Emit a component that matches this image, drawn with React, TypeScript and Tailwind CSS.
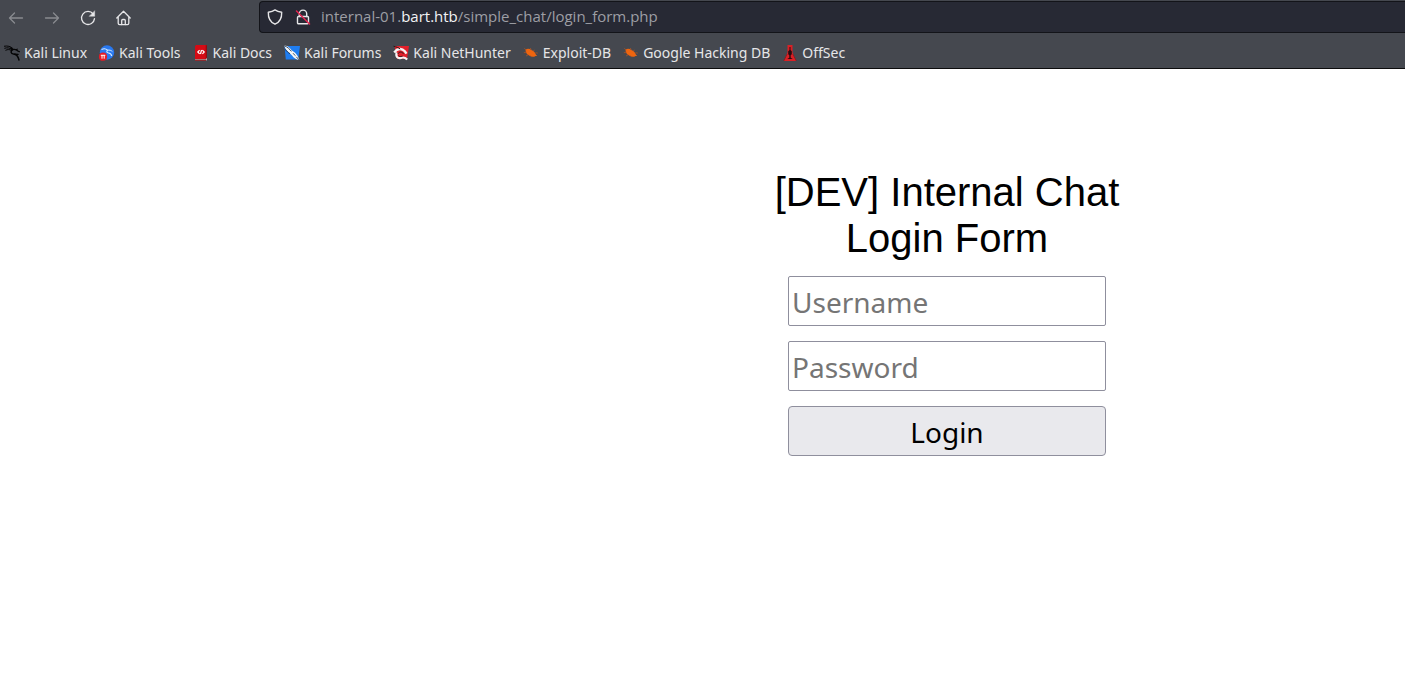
import type { ReactNode } from "react";

const svgProps = { width: 16, height: 16, viewBox: "0 0 16 16", "aria-hidden": true } as const;

const line = {
  fill: "none",
  stroke: "currentColor",
  strokeWidth: 1.3,
  strokeLinecap: "round",
  strokeLinejoin: "round",
} as const;

function BackIcon() {
  return (
    <svg {...svgProps} {...line}>
      <path d="M14.500 8H1.500M6.500 3 1.500 8l5 5" />
    </svg>
  );
}

function ForwardIcon() {
  return (
    <svg {...svgProps} {...line}>
      <path d="M1.500 8h13M9.500 3l5 5-5 5" />
    </svg>
  );
}

function ReloadIcon() {
  return (
    <svg {...svgProps} {...line}>
      <path d="M13.200 4A6.500 6.500 0 1 0 14.500 8.600" />
      <path d="M14.700 1v5.300H9.400z" fill="currentColor" strokeWidth={0.4} />
    </svg>
  );
}

function HomeIcon() {
  return (
    <svg {...svgProps} {...line}>
      <path d="M.8 8 7.500 1.300 14.200 8M2.200 6.800v6.500q0 1.400 1.400 1.400h7.800q1.400 0 1.400-1.400V6.800" />
      <path d="M5.700 14.500v-4q0-1 1-1h1.600q1 0 1 1v4" />
    </svg>
  );
}

function ShieldIcon() {
  return (
    <svg {...svgProps} {...line} strokeWidth={1.4}>
      <path d="M8 .9C6.200 2.200 3.800 2.900 1.300 3.200 1.100 8.700 2.800 13 8 15.200c5.200-2.200 6.900-6.500 6.700-12C12.200 2.900 9.800 2.200 8 .9z" />
    </svg>
  );
}

function InsecureIcon() {
  return (
    <svg {...svgProps} {...line} strokeWidth={1.4}>
      <path d="M4.300 7.500V4.800a3.700 3.700 0 0 1 7.400 0v2.700" />
      <rect x="2.500" y="7.500" width="11" height="7.300" rx="1" />
      <path d="M1.500 2 14.500 15" stroke="#e2244f" strokeWidth="1.500" />
    </svg>
  );
}

function DragonIcon() {
  return (
    <svg {...svgProps} fill="none" stroke="#050506" strokeLinecap="round">
      <path d="M.4 1.200C3.500.6 6.500 1.200 9 3.600M.7 3.200C3.500 2.200 6 3 8 4.500M1.800 5.200C3.800 4.200 5.500 4.400 7 5.200" strokeWidth="1" />
      <path d="M6.800 3 8.500 4.700C6.200 6.400 6.800 8.700 9.500 9c3 .2 4.600 2 5.500 6" strokeWidth="1.500" />
      <path d="M8.500 4.600c2.200-.6 4.200-.2 5.800 1.700l1.200.4M12 5l1.200-.8M10.500 9.100l3.700.2" strokeWidth="1.200" />
    </svg>
  );
}

function ToolsIcon() {
  return (
    <svg {...svgProps}>
      <circle cx="8" cy="7.500" r="7.200" fill="#2878f0" />
      <path d="M2.500 4.500c2.500-1.300 4.700-.7 6 .7-1.300 1.500-.7 2.600 1.100 2.800 2 .2 2.700 1.200 3.200 3" fill="none" stroke="#d9ecff" strokeWidth="1.100" />
      <path d="M8.500 5.200c2-.4 3.700.1 4.900 1.400" fill="none" stroke="#d9ecff" strokeWidth="1" />
      <circle cx="4" cy="11.700" r="4.100" fill="#e51c27" />
      <path d="M1.800 10.300h4.500M3 10.300v3.400M5.200 10.300v3.400" stroke="#fff" strokeWidth="1" />
    </svg>
  );
}

function DocsIcon() {
  return (
    <svg {...svgProps}>
      <path d="M2 1.300 3 0h11v13l-1.300 1.200H2z" fill="#d40b15" />
      <path d="M12.700.2H14V13l-1.300 1.200z" fill="#930b11" />
      <path d="M2 14.200h10.700L14 13v1.800L13 16H2z" fill="#c9b4b4" />
      <path d="M2 15.300h11" stroke="#7f090e" strokeWidth="1" />
      <path d="M6.600 5.200 4.800 7l1.800 1.800M9.400 5.200 11.200 7 9.400 8.800M8.500 5 7.500 9" fill="none" stroke="#fff" strokeWidth="1.200" />
    </svg>
  );
}

function ForumsIcon() {
  return (
    <svg {...svgProps}>
      <path d="M.5 1H16l-1.800 13.500H1.800z" fill="#1f7df0" />
      <path d="M.2.6C3 .7 5.500 2.300 7.600 5.300l3.500 2.500c1.800 1.700 3 4 4.400 7.300-3.500-.8-5.800-2.200-7.400-4.700L5.700 8.300C3.400 6.500 1.300 4.200.2.6z" fill="#f5f7f8" />
      <path d="M.4.8C3.500 2 5.600 4 7.400 6.400M1.200 4.300C2.800 6.400 4.300 7.700 6 8.700M9 8.200l2.300 2.500M12.300 11.800l3 3.300" fill="none" stroke="#172331" strokeWidth=".8" />
    </svg>
  );
}

function NetHunterIcon() {
  return (
    <svg {...svgProps}>
      <path d="M1.500 1H16l-2 13H4z" fill="#e3202b" />
      <path d="M1.200 7.400C4.500 3.200 8.800 3 11.800 6.200l1.700 2.400" fill="none" stroke="#f6f4f4" strokeWidth="2.400" />
      <path d="M3.800 7.500C2.300 11.500 4.800 14 8 12.900c2-.8 4.100-.5 6.200 1.700" fill="none" stroke="#f6f4f4" strokeWidth="2.200" />
      <path d="M.5 1.200C3.500 2 5.500 2.700 7.200 4M4.800 8.800C6.500 6.300 9 6.600 10.500 8.800M5.500 10.500c1 1.600 2.500 1 4 .7" fill="none" stroke="#28191b" strokeWidth="1" />
    </svg>
  );
}

function BugIcon() {
  return (
    <svg {...svgProps}>
      <path d="M2.500 4.800C4.300 3.300 6.500 3.600 8.200 4.900c2.600.8 4.300 2.700 4.600 4.600l1.400 1.500-1.700-.1c-1.500 1.200-4 1.100-5.900-.1C4.100 9.900 2.500 7.700 2.500 4.800z" fill="#ee650f" />
      <path d="m1.300 3.200 2 2M.8 7.700l2.800-.5M3 11l2.300-1.300M7.300 3l1 2M11.300 4.800l-.8 1.400M12.500 7.700l2.300.4M7.500 10.500l1.300 1.700" stroke="#b9531e" strokeWidth=".7" />
    </svg>
  );
}

function OffSecIcon() {
  return (
    <svg {...svgProps}>
      <path d="M5.500 0h5v7.500l3.800 8.500H1.700l3.800-8.500z" fill="#d92025" />
      <path d="M7.500 2h1v3l1.300 1.200v3L8.700 10.300v2.400l2.100 1.300H5.200l2.100-1.300v-2.400L6.200 9.200v-3L7.500 5z" fill="#280c10" />
      <path d="M1.700 16 5.200 9M14.300 16l-3.500-7" stroke="#7d171c" strokeWidth=".7" />
    </svg>
  );
}

const bookmarks: { label: string; icon: ReactNode }[] = [
  { label: "Kali Linux", icon: <DragonIcon /> },
  { label: "Kali Tools", icon: <ToolsIcon /> },
  { label: "Kali Docs", icon: <DocsIcon /> },
  { label: "Kali Forums", icon: <ForumsIcon /> },
  { label: "Kali NetHunter", icon: <NetHunterIcon /> },
  { label: "Exploit-DB", icon: <BugIcon /> },
  { label: "Google Hacking DB", icon: <BugIcon /> },
  { label: "OffSec", icon: <OffSecIcon /> },
];

function BrowserBar() {
  return (
    <header className="overflow-hidden border-b border-[#0c0c0d] bg-[#45484f] font-['Noto_Sans',sans-serif] text-sm text-[#e6e6e8]">
      <div className="flex h-9 items-start">
        <nav aria-label="Navigation" className="flex h-9 w-[259px] shrink-0 items-center gap-5 pl-2">
          <button type="button" aria-label="Back" disabled className="text-[#898b90]"><BackIcon /></button>
          <button type="button" aria-label="Forward" disabled className="text-[#898b90]"><ForwardIcon /></button>
          <button type="button" aria-label="Reload"><ReloadIcon /></button>
          <button type="button" aria-label="Home"><HomeIcon /></button>
        </nav>
        <div className="mt-px flex h-8 grow items-center rounded-l border border-r-0 border-[#131419] bg-[#272934] pl-[7px]">
          <button type="button" aria-label="Tracking protection"><ShieldIcon /></button>
          <button type="button" aria-label="Connection not secure" className="ml-3"><InsecureIcon /></button>
          <a href="#" className="ml-[10px] font-['Open_Sans',sans-serif] text-[15px] text-[#9d9ea4]">
            internal-01.<span className="text-[#f3f3f4]">bart.htb</span>/simple_chat/login_form.php
          </a>
        </div>
      </div>
      <nav aria-label="Bookmarks" className="flex h-8 items-center gap-3 whitespace-nowrap pt-0.5 pl-1">
        {bookmarks.map(({ label, icon }) => (
          <a key={label} href="#" className="flex items-center gap-1">
            {icon}
            <span>{label}</span>
          </a>
        ))}
      </nav>
    </header>
  );
}

const field =
  "h-[50px] w-full border border-[#8f8f9d] pt-0.5 font-['Noto_Sans',sans-serif] text-[28px]";

export default function App() {
  return (
    <div className="min-h-screen bg-white text-black">
      <BrowserBar />
      <main className="ml-[50%] flex max-w-[489px] flex-col items-center pt-[100px]">
        <h1 className="text-center font-['Liberation_Sans',Arial,sans-serif] text-[40px] leading-[46px]">
          [DEV] Internal Chat
          <br />
          Login Form
        </h1>
        <form className="mt-[15px] flex w-full max-w-[318px] flex-col gap-[15px]" onSubmit={(e) => e.preventDefault()}>
          <input type="text" aria-label="Username" placeholder="Username" className={`${field} rounded-xs bg-white px-[3px] placeholder:text-[#757575]`} />
          <input type="password" aria-label="Password" placeholder="Password" className={`${field} rounded-xs bg-white px-[3px] placeholder:text-[#757575]`} />
          <button type="submit" className={`${field} rounded bg-[#e9e9ed]`}>Login</button>
        </form>
      </main>
    </div>
  );
}
